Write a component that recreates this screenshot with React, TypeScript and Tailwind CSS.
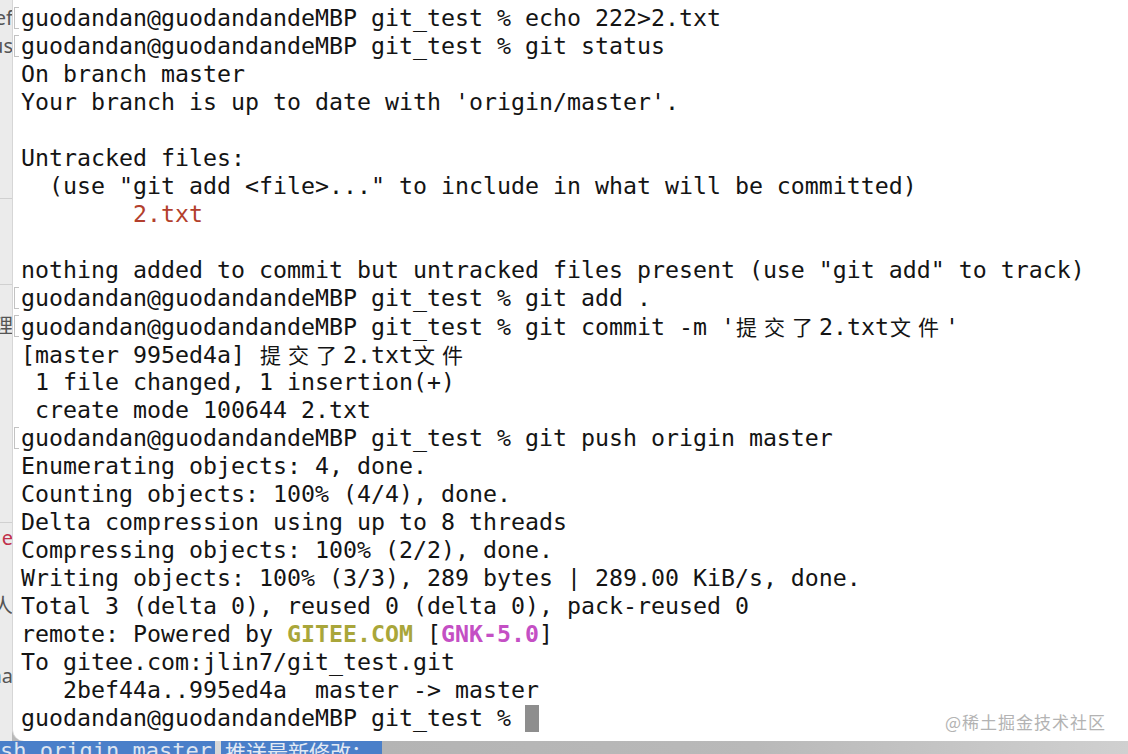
import React from "react";

type Seg = { t: string; c?: string };
type Line = { mark?: boolean; segs: Seg[] };

const prompt = "guodandan@guodandandeMBP git_test % ";

const lines: Line[] = [
  { mark: true, segs: [{ t: prompt + "echo 222>2.txt" }] },
  { mark: true, segs: [{ t: prompt + "git status" }] },
  { segs: [{ t: "On branch master" }] },
  { segs: [{ t: "Your branch is up to date with 'origin/master'." }] },
  { segs: [] },
  { segs: [{ t: "Untracked files:" }] },
  { segs: [{ t: '  (use "git add <file>..." to include in what will be committed)' }] },
  { segs: [{ t: "        " }, { t: "2.txt", c: "red" }] },
  { segs: [] },
  { segs: [{ t: 'nothing added to commit but untracked files present (use "git add" to track)' }] },
  { mark: true, segs: [{ t: prompt + "git add ." }] },
  { mark: true, segs: [{ t: prompt + "git commit -m '提交了2.txt文件'" }] },
  { segs: [{ t: "[master 995ed4a] 提交了2.txt文件" }] },
  { segs: [{ t: " 1 file changed, 1 insertion(+)" }] },
  { segs: [{ t: " create mode 100644 2.txt" }] },
  { mark: true, segs: [{ t: prompt + "git push origin master" }] },
  { segs: [{ t: "Enumerating objects: 4, done." }] },
  { segs: [{ t: "Counting objects: 100% (4/4), done." }] },
  { segs: [{ t: "Delta compression using up to 8 threads" }] },
  { segs: [{ t: "Compressing objects: 100% (2/2), done." }] },
  { segs: [{ t: "Writing objects: 100% (3/3), 289 bytes | 289.00 KiB/s, done." }] },
  { segs: [{ t: "Total 3 (delta 0), reused 0 (delta 0), pack-reused 0" }] },
  {
    segs: [
      { t: "remote: Powered by " },
      { t: "GITEE.COM", c: "gitee" },
      { t: " [" },
      { t: "GNK-5.0", c: "gnk" },
      { t: "]" },
    ],
  },
  { segs: [{ t: "To gitee.com:jlin7/git_test.git" }] },
  { segs: [{ t: "   2bef44a..995ed4a  master -> master" }] },
];

const colorClass: Record<string, string> = {
  red: "text-[#b33f2d]",
  gitee: "text-[#a9a63a] font-bold",
  gnk: "text-[#c44fc4] font-bold",
};

// split text so CJK glyphs take two terminal cells
const renderText = (t: string) => {
  const out: React.ReactNode[] = [];
  let buf = "";
  Array.from(t).forEach((ch, i) => {
    if (/[\u4e00-\u9fff]/.test(ch)) {
      if (buf) {
        out.push(buf);
        buf = "";
      }
      out.push(
        <span
          key={i}
          className="inline-block w-[28px] pl-[1px] text-[21px] [font-family:'Noto_Sans_CJK_SC',sans-serif]"
        >
          {ch}
        </span>
      );
    } else {
      buf += ch;
    }
  });
  if (buf) out.push(buf);
  return out;
};

const TermLine = ({ line }: { line: Line }) => (
  <div className="flex h-[28px] items-center leading-[28px]">
    <span className="flex w-[8px] shrink-0 items-center">
      {line.mark && (
        <span className="ml-[1px] h-[22px] w-[5px] border-y border-l border-[#c2c2c2]" />
      )}
    </span>
    <span className="whitespace-pre">
      {line.segs.map((s, i) => (
        <span key={i} className={s.c ? colorClass[s.c] : ""}>
          {renderText(s.t)}
        </span>
      ))}
    </span>
  </div>
);

const sideBits = [
  { y: 4, t: "ef" },
  { y: 32, t: "us" },
  { y: 312, t: "理" },
  { y: 524, t: "e", red: true },
  { y: 592, t: "人" },
  { y: 662, t: "na" },
];

export default function App() {
  return (
    <div className="flex h-[754px] w-[1128px] flex-col overflow-hidden bg-[#b9b9b9]">
      <div className="flex h-[741px] shrink-0">
        {/* page behind the terminal window */}
        <div className="relative w-[12px] shrink-0 overflow-hidden bg-[#ebebeb] text-[20px] text-[#555] [font-family:'Noto_Sans','Noto_Sans_CJK_SC',sans-serif]">
          <div className="absolute left-0 top-[198px] h-px w-full bg-[#d0d0d0]" />
          <div className="absolute left-0 top-[284px] h-px w-full bg-[#d0d0d0]" />
          <div className="absolute left-0 top-[522px] h-px w-full bg-[#d0d0d0]" />
          {sideBits.map((b) => (
            <div
              key={b.y}
              className={`absolute right-[-1px] h-[28px] leading-[28px] ${b.red ? "text-[#c0304a]" : ""}`}
              style={{ top: b.y }}
            >
              {b.t}
            </div>
          ))}
        </div>
        {/* terminal window */}
        <div className="relative flex-1 rounded-bl-[12px] border-l border-[#d6d6d6] bg-white pt-[4px] text-[23.25px] text-[#141414] [font-family:'DejaVu_Sans_Mono',monospace]">
          {lines.map((l, i) => (
            <TermLine key={i} line={l} />
          ))}
          <div className="flex h-[28px] items-center leading-[28px]">
            <span className="w-[8px] shrink-0" />
            <span className="whitespace-pre">{prompt}</span>
            <span className="inline-block h-[27px] w-[14px] bg-[#8e8e8e]" />
          </div>
          <div className="absolute bottom-[7px] right-[22px] text-[17px] tracking-[1px] text-[#b3b3b3] [font-family:'Noto_Sans_CJK_SC',sans-serif]">
            @稀土掘金技术社区
          </div>
        </div>
      </div>
      {/* strip of the page under the window */}
      <div className="flex h-[13px] shrink-0 overflow-hidden">
        <div className="flex h-[13px] w-[382px] items-start overflow-hidden bg-[#4a7fc9]">
          <span className="mt-[-1px] whitespace-pre text-[22px] leading-[22px] text-[#dde5f1] [font-family:'DejaVu_Sans_Mono',monospace]">
            sh origin master
          </span>
          <span className="ml-[3px] h-[13px] w-[6px] bg-[#d8d8d8]" />
          <span className="mt-[-1px] whitespace-pre pl-[4px] text-[21px] leading-[22px] text-[#e3eaf4] [font-family:'Noto_Sans_CJK_SC',sans-serif]">
            推送最新修改：
          </span>
        </div>
        <div className="h-[13px] flex-1 bg-gradient-to-r from-[#b4b4b4] via-[#b9b9b9] to-[#d0d0d0]" />
      </div>
    </div>
  );
}
